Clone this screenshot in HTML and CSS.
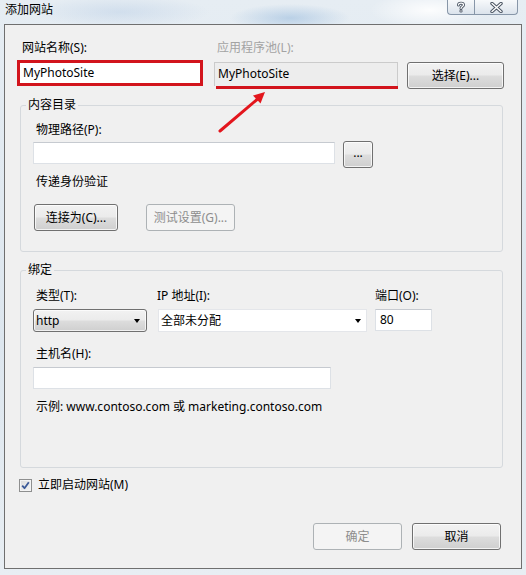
FILE: index.html
```html
<!DOCTYPE html>
<html lang="zh-CN">
<head>
<meta charset="utf-8">
<title>添加网站</title>
<link rel="stylesheet" href="styles.css">
</head>
<body>
<div class="window">
  <div class="titlebar">
    <span class="title">添加网站</span>
    <div class="caption">
      <span class="cap help">
        <svg width="12" height="12" viewBox="0 0 12 12"><path d="M3.5 4 C3.5 1.5 8.5 1.5 8.5 4 C8.5 5.6 6 5.6 6 7.5" fill="none" stroke="#4b5563" stroke-width="3" stroke-linecap="round"/><path d="M3.5 4 C3.5 1.5 8.5 1.5 8.5 4 C8.5 5.6 6 5.6 6 7.5" fill="none" stroke="#fff" stroke-width="1.2" stroke-linecap="round"/><circle cx="6" cy="10" r="1.6" fill="#4b5563"/><circle cx="6" cy="10" r="0.7" fill="#fff"/></svg>
      </span>
      <span class="cap close">
        <svg width="13" height="11" viewBox="0 0 13 11"><path d="M2 1.5 L11 9.5 M11 1.5 L2 9.5" stroke="#4b5563" stroke-width="3.4" stroke-linecap="round"/><path d="M2 1.5 L11 9.5 M11 1.5 L2 9.5" stroke="#fff" stroke-width="1.4" stroke-linecap="round"/></svg>
      </span>
    </div>
  </div>

  <div class="client">
    <div class="row-top">
      <div class="col col-name">
        <div class="lbl">网站名称(S):</div>
        <div class="field-hl">MyPhotoSite</div>
      </div>
      <div class="col col-pool">
        <div class="lbl dis">应用程序池(L):</div>
        <div class="field-ro">MyPhotoSite</div>
        <div class="uline"></div>
      </div>
      <div class="btn btn-select">选择(E)...</div>
    </div>

    <fieldset class="group g1">
      <legend>内容目录</legend>
      <div class="gbody g1-body">
        <div class="lbl">物理路径(P):</div>
        <div class="path-row">
          <div class="field path-field"></div>
          <div class="btn btn-browse">...</div>
        </div>
        <div class="lbl auth-lbl">传递身份验证</div>
        <div class="auth-row">
          <div class="btn btn-connect">连接为(C)...</div>
          <div class="btn btn-test disabled">测试设置(G)...</div>
        </div>
      </div>
    </fieldset>

    <fieldset class="group g2">
      <legend>绑定</legend>
      <div class="gbody g2-body">
        <div class="bind-row">
          <div class="bcol bcol-type">
            <div class="lbl">类型(T):</div>
            <div class="combo combo-type"><span>http</span><i class="caret"></i></div>
          </div>
          <div class="bcol bcol-ip">
            <div class="lbl ip-lbl">IP 地址(I):</div>
            <div class="combo combo-ip"><span>全部未分配</span><i class="caret"></i></div>
          </div>
          <div class="bcol bcol-port">
            <div class="lbl port-lbl">端口(O):</div>
            <div class="field port-field">80</div>
          </div>
        </div>
        <div class="lbl host-lbl">主机名(H):</div>
        <div class="field host-field"></div>
        <div class="lbl example">示例: www.contoso.com 或 marketing.contoso.com</div>
      </div>
    </fieldset>

    <div class="check-row">
      <span class="checkbox">
        <svg width="9" height="9" viewBox="0 0 9 9"><path d="M1.2 4.6 L3.5 7.2 L7.8 1.2" fill="none" stroke="#3c5a98" stroke-width="1.8" stroke-linejoin="round"/></svg>
      </span>
      <span class="check-lbl">立即启动网站(M)</span>
    </div>

    <div class="footer">
      <div class="btn btn-foot disabled">确定</div>
      <div class="btn btn-foot">取消</div>
    </div>
  </div>

  <svg class="arrow" width="70" height="55" viewBox="0 0 70 55">
    <line x1="10" y1="46" x2="47" y2="14.5" stroke="#e3161d" stroke-width="3" stroke-linecap="round"/>
    <polygon points="55,7 50.5,18.5 43,10.5" fill="#e3161d"/>
  </svg>
</div>
</body>
</html>
```
FILE: styles.css
```css
* { box-sizing: border-box; }
html, body { margin: 0; padding: 0; }
body {
  width: 526px;
  height: 575px;
  overflow: hidden;
  font-family: "Noto Sans", "Noto Sans CJK SC", sans-serif;
  font-size: 12px;
  line-height: 16px;
  color: #000;
}
.window {
  position: relative;
  width: 526px;
  height: 575px;
  background:
    radial-gradient(ellipse 60px 14px at 290px 18px, rgba(150,185,220,0.55), rgba(150,185,220,0)),
    radial-gradient(ellipse 90px 16px at 120px 12px, rgba(170,195,225,0.35), rgba(170,195,225,0)),
    radial-gradient(ellipse 60px 18px at 430px 10px, rgba(255,255,255,0.9), rgba(255,255,255,0)),
    linear-gradient(180deg, #e6edf3 0%, #dde6ee 60%, #e8eef3 100%);
}
.titlebar {
  height: 24px;
  display: flex;
  justify-content: space-between;
  align-items: flex-start;
}
.title { padding: 2px 0 0 5px; }
.caption { display: flex; margin-right: 8px; }
.cap {
  height: 15px;
  border: 1px solid #8796a8;
  border-top: none;
  background: linear-gradient(180deg, #f7f9fb 0%, #e9eef3 50%, #dbe3ec 100%);
  display: flex;
  align-items: center;
  justify-content: center;
}
.help { width: 27px; border-right: none; border-radius: 0 0 0 4px; }
.close { width: 44px; border-radius: 0 0 4px 0; }

.client {
  height: 545px;
  margin: 0 4px;
  border: 1px solid #6f6f6f;
  background: #f0f0f0;
  padding: 15px 0 0 12px;
}
.lbl { height: 16px; white-space: nowrap; }
.dis { color: #a3a3a3; }

.row-top { display: flex; align-items: flex-start; }
.col { display: flex; flex-direction: column; }
.col-name { width: 186px; }
.col-name .lbl { padding-left: 5px; }
.field-hl {
  margin-top: 4px;
  height: 26px;
  border: 3px solid #d2141c;
  background: #fff;
  padding: 2px 0 0 3px;
}
.col-pool { width: 184px; margin-left: 11px; }
.col-pool .lbl { padding-left: 3px; }
.field-ro {
  margin-top: 6px;
  height: 24px;
  border: 1px solid #cbcbcb;
  border-bottom: none;
  background: #ededed;
  padding: 3px 0 0 3px;
}
.uline { height: 3px; margin-left: 2px; background: #d2141c; }

.btn {
  height: 27px;
  border: 1px solid #707070;
  border-radius: 3px;
  background: linear-gradient(180deg, #f2f2f2 0%, #ebebeb 48%, #dddddd 52%, #cfcfcf 100%);
  box-shadow: inset 0 0 0 1px rgba(255,255,255,0.75);
  display: flex;
  align-items: center;
  justify-content: center;
  white-space: nowrap;
}
.btn.disabled {
  border-color: #adb2b5;
  background: #f4f4f4;
  color: #8d8d8d;
  box-shadow: none;
}
.btn-select { width: 97px; margin: 22px 0 0 9px; }

.group {
  margin: 0;
  padding: 0;
  border: 1px solid #d5d9dd;
  border-radius: 3px;
  width: 483px;
  margin-left: 3px;
}
.group legend {
  margin-left: 5px;
  padding: 0 2px;
  line-height: 16px;
}
.g1 { margin-top: 8px; }
.g1-body { padding: 9px 0 20px 12px; }
.gbody > .lbl { padding-left: 3px; }
.field {
  height: 22px;
  border: 1px solid #dde1e6;
  border-top-color: #c6cad0;
  background: #fff;
}
.path-row { display: flex; align-items: flex-start; margin-top: 3px; }
.path-field { width: 302px; margin-top: 1px; }
.btn-browse { width: 30px; margin-left: 8px; padding-bottom: 4px; }
.auth-lbl { margin-top: 6px; }
.auth-row { display: flex; margin-top: 14px; padding-left: 1px; }
.btn-connect { width: 84px; }
.btn-test { width: 89px; margin-left: 28px; }

.g2 { margin-top: 10px; }
.g2-body { padding: 10px 0 52px 12px; }
.bind-row { display: flex; align-items: flex-start; }
.bcol { display: flex; flex-direction: column; }
.bcol-type { width: 114px; }
.bcol-type .lbl { padding-left: 3px; }
.bcol-ip { width: 209px; margin-left: 11px; }
.ip-lbl { margin-left: -1px; }
.bcol-port { width: 57px; margin-left: 8px; }
.combo {
  margin-top: 5px;
  height: 23px;
  display: flex;
  align-items: center;
  justify-content: space-between;
  padding: 0 6px 0 2px;
}
.combo-type {
  border: 1px solid #707070;
  border-radius: 3px;
  background: linear-gradient(180deg, #f2f2f2 0%, #ebebeb 48%, #dddddd 52%, #cfcfcf 100%);
  box-shadow: inset 0 0 0 1px rgba(255,255,255,0.7);
}
.combo-ip {
  border: 1px solid #e4e6ea;
  background: #fff;
  padding-left: 2px;
  padding-right: 5px;
}
.caret {
  width: 0;
  height: 0;
  border-left: 3.5px solid transparent;
  border-right: 3.5px solid transparent;
  border-top: 4px solid #000;
}
.port-field { margin-top: 5px; padding: 2px 0 0 4px; }
.host-lbl { margin-top: 14px; }
.host-field { width: 298px; margin-top: 5px; }
.example { margin-top: 10px; }

.check-row { display: flex; align-items: center; margin-top: 9px; padding-left: 2px; height: 16px; }
.checkbox {
  width: 13px;
  height: 13px;
  border: 1px solid #8e8f8f;
  background: linear-gradient(135deg, #dcdcdc 0%, #f4f4f4 100%);
  box-shadow: inset 0 0 0 1px #f4f4f4;
  display: flex;
  align-items: center;
  justify-content: center;
}
.check-lbl { margin-left: 6px; }

.footer {
  display: flex;
  justify-content: flex-end;
  margin-top: 30px;
  padding-right: 20px;
  gap: 10px;
}
.btn-foot { width: 89px; }

.arrow { position: absolute; left: 210px; top: 85px; }
```
